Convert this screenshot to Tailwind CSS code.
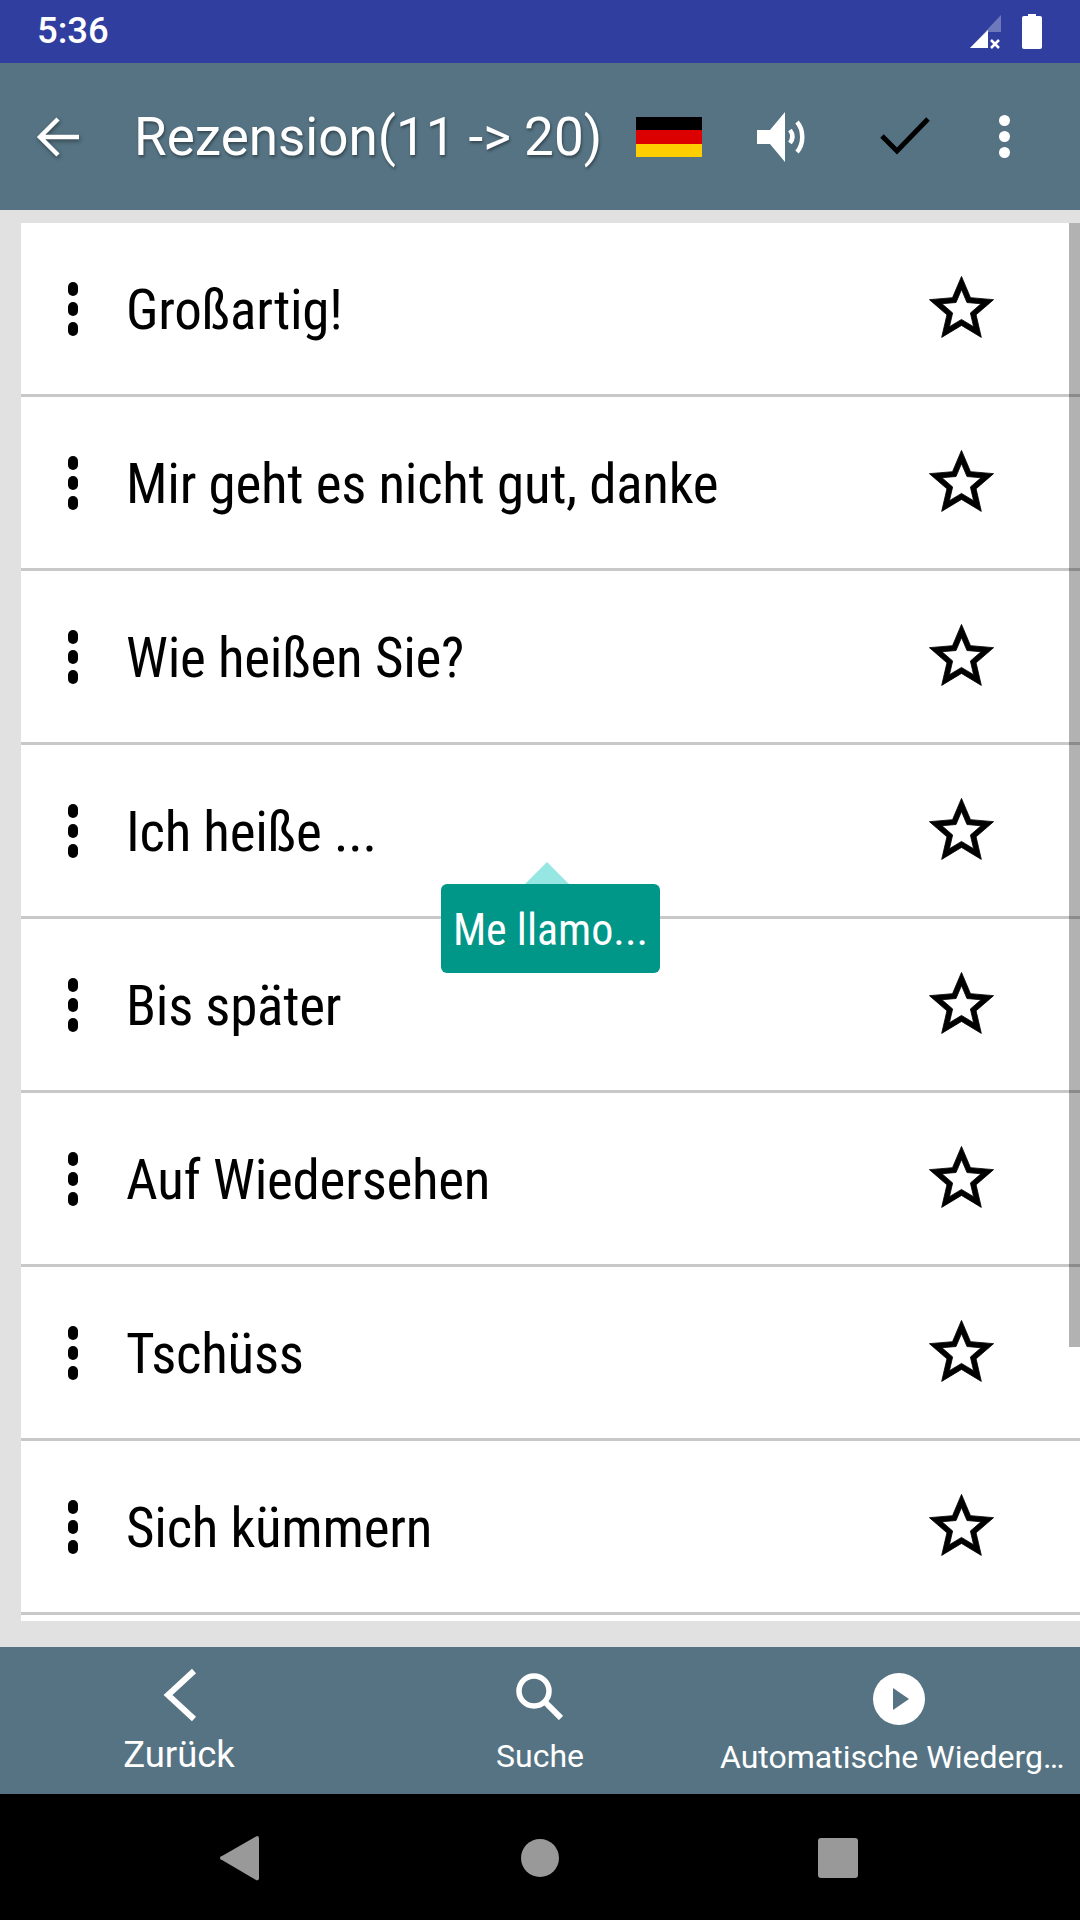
<!DOCTYPE html>
<html lang="de">

<head>
    <meta charset="UTF-8" />
    <title>Rezension</title>
    <script src="https://cdn.jsdelivr.net/npm/@tailwindcss/browser@4"></script>
</head>

<body class="w-[1080px] h-[1920px] overflow-hidden bg-[#e1e1e1] font-['Roboto',sans-serif]">
    <div class="flex flex-col h-full">
        <!-- status bar -->
        <div class="h-[63px] shrink-0 bg-[#303f9f] flex items-center pl-[37px] pr-[38px] text-white">
            <span class="text-[36.5px] font-medium leading-none">5:36</span>
            <div class="ml-auto flex items-center gap-[20px]">
                <svg width="33" height="34" viewBox="0 0 33 34">
                    <path d="M32 0V17H19V33H1z" fill="#fff" opacity="0.3" />
                    <path d="M19 15V33H1z" fill="#fff" />
                    <path d="M22 25l8 8M30 25l-8 8" stroke="#fff" stroke-width="2.5" />
                </svg>
                <svg width="20" height="35" viewBox="0 0 20 35">
                    <path d="M6 0h8v2h4a2 2 0 0 1 2 2v29a2 2 0 0 1-2 2H2a2 2 0 0 1-2-2V4a2 2 0 0 1 2-2h4z" fill="#fff" />
                </svg>
            </div>
        </div>

        <!-- toolbar -->
        <div class="h-[147px] shrink-0 bg-[#557383] flex items-center text-white">
            <svg class="ml-[36px] drop-shadow-[1px_2px_2px_rgba(0,0,0,0.4)]" width="44" height="44" viewBox="0 0 44 44">
                <path d="M43 22H5M22 4L4 22l18 18" fill="none" stroke="#fff" stroke-width="4.5" />
            </svg>
            <span class="ml-[54px] mt-[2px] text-[53px] leading-none whitespace-nowrap [text-shadow:1px_2px_3px_rgba(0,0,0,0.4)]">Rezension(11 -&gt; 20)</span>
            <div class="ml-[34px] mt-[1px] w-[66px] h-[40px] flex flex-col">
                <div class="flex-1 bg-black"></div>
                <div class="flex-1 bg-[#dd0000]"></div>
                <div class="flex-1 bg-[#ffce00]"></div>
            </div>
            <svg class="ml-[54px]" width="52" height="52" viewBox="0 0 52 52">
                <path d="M1 19h13L29 1v50L14 33H1z" fill="#fff" />
                <path d="M34 19c3 4 3 9 0 13M41 11c7 8 7 22 0 30" fill="none" stroke="#fff" stroke-width="4.5" />
            </svg>
            <svg class="ml-[72px] mb-[4px]" width="50" height="40" viewBox="0 0 50 40">
                <path d="M2 21l15 15L48 4" fill="none" stroke="#000" stroke-width="5" />
            </svg>
            <div class="ml-[69px] flex flex-col gap-[5px]">
                <div class="w-[11px] h-[11px] rounded-full bg-white"></div>
                <div class="w-[11px] h-[11px] rounded-full bg-white"></div>
                <div class="w-[11px] h-[11px] rounded-full bg-white"></div>
            </div>
        </div>

        <!-- list -->
        <div class="relative flex-1 pt-[13px] pl-[21px] pb-[26px]">
            <div class="h-full bg-white overflow-hidden text-black text-[55px] font-[450] tracking-[-0.25px] [font-stretch:75%]">
                <div class="h-[174px] border-b-[3px] border-[#c8c8c8] flex items-center pl-[47px] pr-[80px]">
                    <div class="flex flex-col gap-[6px] w-[58px]"><i class="w-[10px] h-[14px] rounded-full bg-black"></i><i class="w-[10px] h-[14px] rounded-full bg-black"></i><i class="w-[10px] h-[14px] rounded-full bg-black"></i></div>
                    <span class="flex-1 mt-[3px]">Großartig!</span>
                    <svg width="77" height="77" viewBox="0 0 24 24"><path stroke="#000" stroke-width="0.25" d="M22 9.24l-7.19-.62L12 2 9.19 8.63 2 9.24l5.46 4.73L5.82 21 12 17.27 18.18 21l-1.63-7.03L22 9.24zM12 15.4l-3.76 2.27 1-4.28-3.32-2.88 4.38-.38L12 6.1l1.71 4.04 4.38.38-3.32 2.88 1 4.28L12 15.4z" /></svg>
                </div>
                <div class="h-[174px] border-b-[3px] border-[#c8c8c8] flex items-center pl-[47px] pr-[80px]">
                    <div class="flex flex-col gap-[6px] w-[58px]"><i class="w-[10px] h-[14px] rounded-full bg-black"></i><i class="w-[10px] h-[14px] rounded-full bg-black"></i><i class="w-[10px] h-[14px] rounded-full bg-black"></i></div>
                    <span class="flex-1 mt-[3px]">Mir geht es nicht gut, danke</span>
                    <svg width="77" height="77" viewBox="0 0 24 24"><path stroke="#000" stroke-width="0.25" d="M22 9.24l-7.19-.62L12 2 9.19 8.63 2 9.24l5.46 4.73L5.82 21 12 17.27 18.18 21l-1.63-7.03L22 9.24zM12 15.4l-3.76 2.27 1-4.28-3.32-2.88 4.38-.38L12 6.1l1.71 4.04 4.38.38-3.32 2.88 1 4.28L12 15.4z" /></svg>
                </div>
                <div class="h-[174px] border-b-[3px] border-[#c8c8c8] flex items-center pl-[47px] pr-[80px]">
                    <div class="flex flex-col gap-[6px] w-[58px]"><i class="w-[10px] h-[14px] rounded-full bg-black"></i><i class="w-[10px] h-[14px] rounded-full bg-black"></i><i class="w-[10px] h-[14px] rounded-full bg-black"></i></div>
                    <span class="flex-1 mt-[3px]">Wie heißen Sie?</span>
                    <svg width="77" height="77" viewBox="0 0 24 24"><path stroke="#000" stroke-width="0.25" d="M22 9.24l-7.19-.62L12 2 9.19 8.63 2 9.24l5.46 4.73L5.82 21 12 17.27 18.18 21l-1.63-7.03L22 9.24zM12 15.4l-3.76 2.27 1-4.28-3.32-2.88 4.38-.38L12 6.1l1.71 4.04 4.38.38-3.32 2.88 1 4.28L12 15.4z" /></svg>
                </div>
                <div class="h-[174px] border-b-[3px] border-[#c8c8c8] flex items-center pl-[47px] pr-[80px]">
                    <div class="flex flex-col gap-[6px] w-[58px]"><i class="w-[10px] h-[14px] rounded-full bg-black"></i><i class="w-[10px] h-[14px] rounded-full bg-black"></i><i class="w-[10px] h-[14px] rounded-full bg-black"></i></div>
                    <span class="flex-1 mt-[3px]">Ich heiße ...</span>
                    <svg width="77" height="77" viewBox="0 0 24 24"><path stroke="#000" stroke-width="0.25" d="M22 9.24l-7.19-.62L12 2 9.19 8.63 2 9.24l5.46 4.73L5.82 21 12 17.27 18.18 21l-1.63-7.03L22 9.24zM12 15.4l-3.76 2.27 1-4.28-3.32-2.88 4.38-.38L12 6.1l1.71 4.04 4.38.38-3.32 2.88 1 4.28L12 15.4z" /></svg>
                </div>
                <div class="h-[174px] border-b-[3px] border-[#c8c8c8] flex items-center pl-[47px] pr-[80px]">
                    <div class="flex flex-col gap-[6px] w-[58px]"><i class="w-[10px] h-[14px] rounded-full bg-black"></i><i class="w-[10px] h-[14px] rounded-full bg-black"></i><i class="w-[10px] h-[14px] rounded-full bg-black"></i></div>
                    <span class="flex-1 mt-[3px]">Bis später</span>
                    <svg width="77" height="77" viewBox="0 0 24 24"><path stroke="#000" stroke-width="0.25" d="M22 9.24l-7.19-.62L12 2 9.19 8.63 2 9.24l5.46 4.73L5.82 21 12 17.27 18.18 21l-1.63-7.03L22 9.24zM12 15.4l-3.76 2.27 1-4.28-3.32-2.88 4.38-.38L12 6.1l1.71 4.04 4.38.38-3.32 2.88 1 4.28L12 15.4z" /></svg>
                </div>
                <div class="h-[174px] border-b-[3px] border-[#c8c8c8] flex items-center pl-[47px] pr-[80px]">
                    <div class="flex flex-col gap-[6px] w-[58px]"><i class="w-[10px] h-[14px] rounded-full bg-black"></i><i class="w-[10px] h-[14px] rounded-full bg-black"></i><i class="w-[10px] h-[14px] rounded-full bg-black"></i></div>
                    <span class="flex-1 mt-[3px]">Auf Wiedersehen</span>
                    <svg width="77" height="77" viewBox="0 0 24 24"><path stroke="#000" stroke-width="0.25" d="M22 9.24l-7.19-.62L12 2 9.19 8.63 2 9.24l5.46 4.73L5.82 21 12 17.27 18.18 21l-1.63-7.03L22 9.24zM12 15.4l-3.76 2.27 1-4.28-3.32-2.88 4.38-.38L12 6.1l1.71 4.04 4.38.38-3.32 2.88 1 4.28L12 15.4z" /></svg>
                </div>
                <div class="h-[174px] border-b-[3px] border-[#c8c8c8] flex items-center pl-[47px] pr-[80px]">
                    <div class="flex flex-col gap-[6px] w-[58px]"><i class="w-[10px] h-[14px] rounded-full bg-black"></i><i class="w-[10px] h-[14px] rounded-full bg-black"></i><i class="w-[10px] h-[14px] rounded-full bg-black"></i></div>
                    <span class="flex-1 mt-[3px]">Tschüss</span>
                    <svg width="77" height="77" viewBox="0 0 24 24"><path stroke="#000" stroke-width="0.25" d="M22 9.24l-7.19-.62L12 2 9.19 8.63 2 9.24l5.46 4.73L5.82 21 12 17.27 18.18 21l-1.63-7.03L22 9.24zM12 15.4l-3.76 2.27 1-4.28-3.32-2.88 4.38-.38L12 6.1l1.71 4.04 4.38.38-3.32 2.88 1 4.28L12 15.4z" /></svg>
                </div>
                <div class="h-[174px] border-b-[3px] border-[#c8c8c8] flex items-center pl-[47px] pr-[80px]">
                    <div class="flex flex-col gap-[6px] w-[58px]"><i class="w-[10px] h-[14px] rounded-full bg-black"></i><i class="w-[10px] h-[14px] rounded-full bg-black"></i><i class="w-[10px] h-[14px] rounded-full bg-black"></i></div>
                    <span class="flex-1 mt-[3px]">Sich kümmern</span>
                    <svg width="77" height="77" viewBox="0 0 24 24"><path stroke="#000" stroke-width="0.25" d="M22 9.24l-7.19-.62L12 2 9.19 8.63 2 9.24l5.46 4.73L5.82 21 12 17.27 18.18 21l-1.63-7.03L22 9.24zM12 15.4l-3.76 2.27 1-4.28-3.32-2.88 4.38-.38L12 6.1l1.71 4.04 4.38.38-3.32 2.88 1 4.28L12 15.4z" /></svg>
                </div>
            </div>

            <!-- scrollbar -->
            <div class="absolute top-[13px] right-0 w-[11px] h-[1124px] bg-black/30"></div>

            <!-- tooltip -->
            <div class="absolute left-[441px] top-[674px] w-[219px] h-[89px] pt-[3px] bg-[#009688] rounded-[6px] flex items-center justify-center text-white text-[44px] leading-none font-[450] [font-stretch:75%]">Me llamo...</div>
            <div class="absolute left-[525px] top-[652px] w-0 h-0 border-x-[22px] border-x-transparent border-b-[22px] border-b-[#96e6e4]"></div>
        </div>

        <!-- bottom actions -->
        <div class="h-[147px] shrink-0 bg-[#557383] text-white grid grid-cols-3">
            <div class="flex flex-col items-center pt-[21px]">
                <svg width="36" height="54" viewBox="0 0 36 54"><path d="M32 3L6 27l26 24" fill="none" stroke="#fff" stroke-width="6" /></svg>
                <span class="mt-[15px] -ml-[2px] text-[36.5px] leading-none">Zurück</span>
            </div>
            <div class="flex flex-col items-center pt-[25px]">
                <svg class="-ml-[2px]" width="48" height="48" viewBox="0 0 48 48"><circle cx="19" cy="19" r="15" fill="none" stroke="#fff" stroke-width="5.5" /><path d="M29 29l17 17" stroke="#fff" stroke-width="6" /></svg>
                <span class="mt-[20px] text-[32px] leading-none">Suche</span>
            </div>
            <div class="flex flex-col items-center pt-[25px] min-w-0">
                <svg class="-ml-[2px]" width="54" height="54" viewBox="0 0 54 54"><circle cx="27" cy="27" r="26" fill="#fff" /><path d="M21 16v22l16-11z" fill="#557383" /></svg>
                <span class="mt-[11px] w-[346px] self-start text-[32px] leading-[40px] truncate">Automatische Wiedergabe</span>
            </div>
        </div>

        <!-- nav bar -->
        <div class="h-[126px] shrink-0 bg-black flex items-center pt-[2px]">
            <svg class="ml-[220px]" width="39" height="46" viewBox="0 0 39 46"><path d="M37 1a2 2 0 0 1 2 2v40a2 2 0 0 1-3 2L2 25a2 2 0 0 1 0-4z" fill="#999" /></svg>
            <div class="ml-[262px] w-[38px] h-[38px] rounded-full bg-[#999]"></div>
            <div class="ml-[259px] w-[40px] h-[40px] rounded-[3px] bg-[#999]"></div>
        </div>
    </div>
</body>

</html>
